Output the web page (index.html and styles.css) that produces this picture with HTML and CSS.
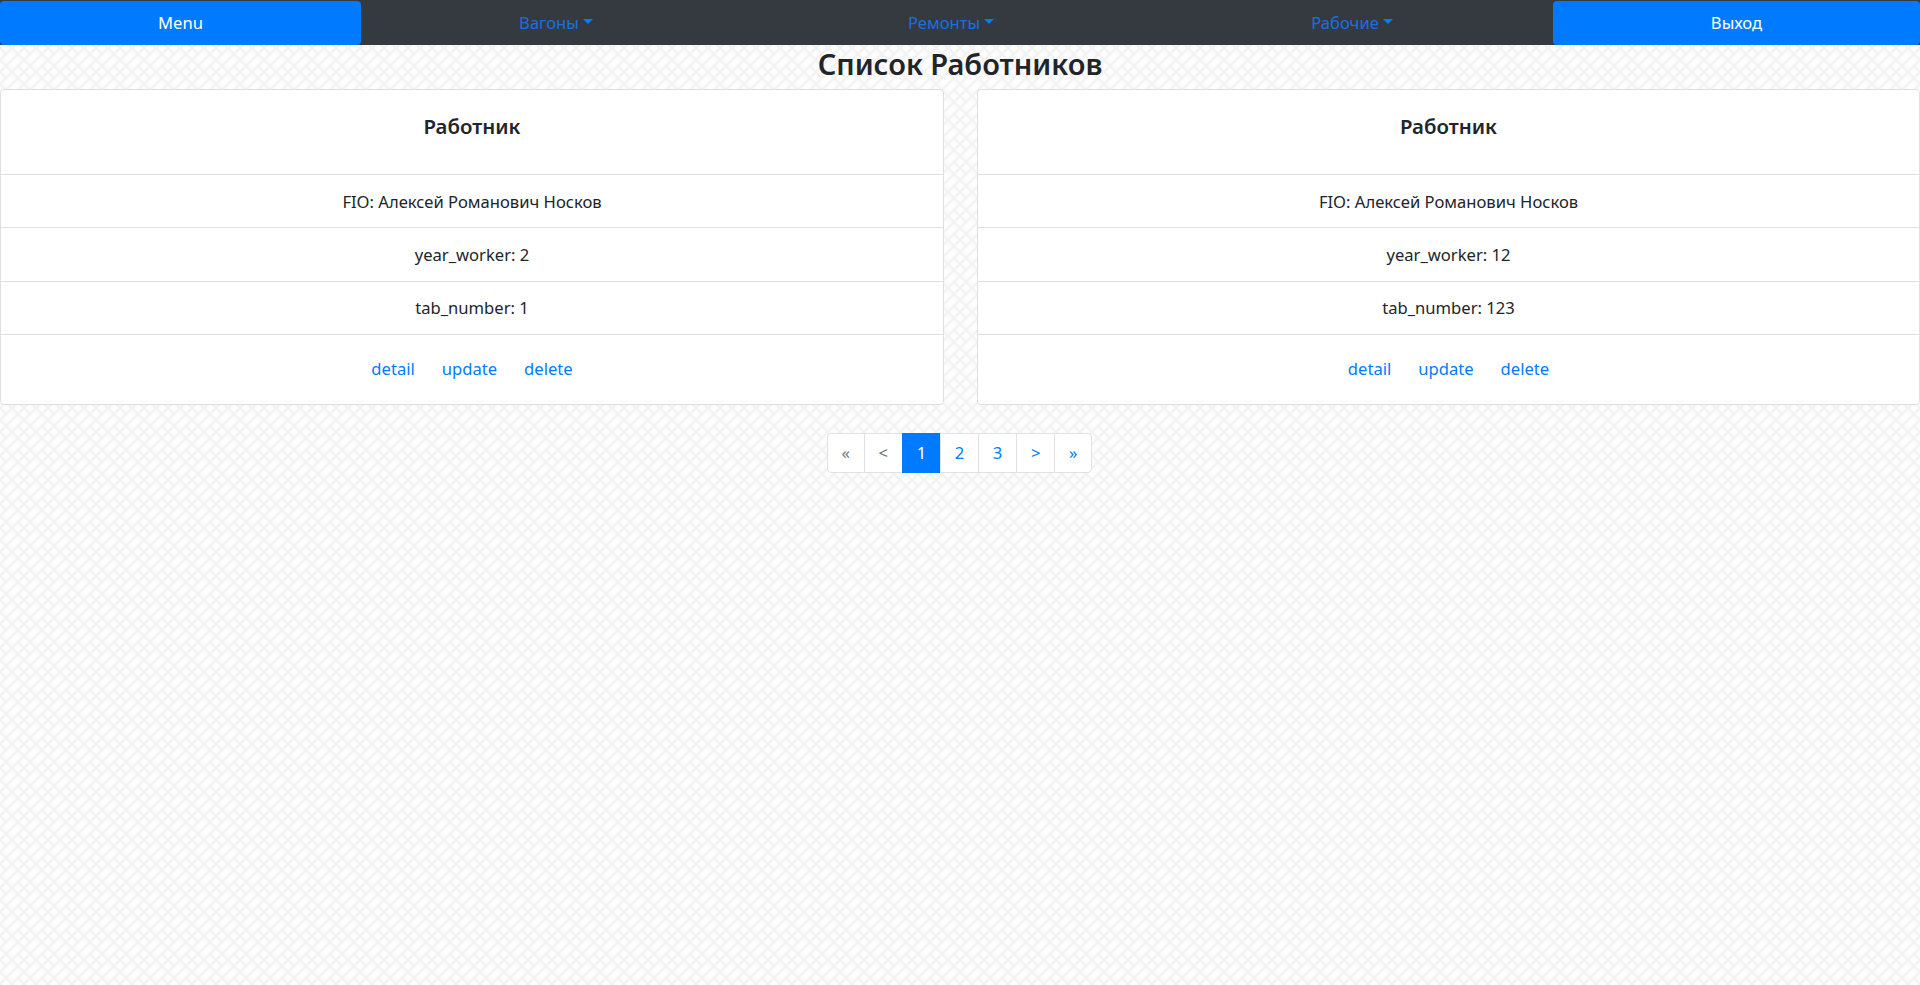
FILE: index.html
```html
<!DOCTYPE html>
<html>
<head>
<meta charset="utf-8">
<title>Список Работников</title>
<link rel="stylesheet" href="styles.css">
</head>
<body>
<nav class="navbar">
<a class="nav-btn nav-btn-left" href="#">Menu</a>
<div class="nav-links">
<a class="nav-link" href="#">Вагоны<span class="caret"></span></a>
<a class="nav-link" href="#">Ремонты<span class="caret"></span></a>
<a class="nav-link" href="#">Рабочие<span class="caret"></span></a>
</div>
<a class="nav-btn nav-btn-right" href="#">Выход</a>
</nav>
<h1 class="page-title">Список Работников</h1>
<div class="cards">
<div class="card">
<h5 class="card-head">Работник</h5>
<div class="card-row">FIO: Алексей Романович Носков</div>
<div class="card-row">year_worker: 2</div>
<div class="card-row">tab_number: 1</div>
<div class="card-foot"><a href="#">detail</a><a href="#">update</a><a href="#">delete</a></div>
</div>
<div class="card">
<h5 class="card-head">Работник</h5>
<div class="card-row">FIO: Алексей Романович Носков</div>
<div class="card-row">year_worker: 12</div>
<div class="card-row">tab_number: 123</div>
<div class="card-foot"><a href="#">detail</a><a href="#">update</a><a href="#">delete</a></div>
</div>
</div>
<ul class="pagination">
<li class="muted"><a href="#">«</a></li>
<li class="muted"><a href="#">&lt;</a></li>
<li class="active"><a href="#">1</a></li>
<li><a href="#">2</a></li>
<li><a href="#">3</a></li>
<li><a href="#">&gt;</a></li>
<li><a href="#">»</a></li>
</ul>
</body>
</html>
```

FILE: styles.css
```css
*{
box-sizing:border-box;
}
html,body{
height:100%;
}
body{
margin:0;
font-family:"Noto Sans","Open Sans",sans-serif;
font-size:16.6px;
color:#212529;
background-color:#fdfdfd;
background-image:url("data:image/svg+xml,%3Csvg xmlns='http://www.w3.org/2000/svg' width='24' height='24'%3E%3Cpath d='M12 0L24 12L12 24L0 12Z M6 18L18 6 M-6 -6L6 6 M18 18L30 30 M18 6L30 -6 M-6 30L6 18' fill='none' stroke='%23f3f3f3' stroke-width='2.5'/%3E%3C/svg%3E");
}
a{
text-decoration:none;
color:#007bff;
}
.navbar{
display:flex;
height:45px;
background:#343a40;
border-top:1px solid #343a40;
}
.nav-btn{
display:flex;
align-items:center;
justify-content:center;
padding-bottom:1px;
background:#007bff;
color:#fff;
border-radius:4px;
}
.nav-btn-left{
width:361px;
}
.nav-btn-right{
width:367px;
}
.nav-links{
flex:1;
display:grid;
grid-template-columns:390px 400px 402px;
}
.nav-link{
display:flex;
align-items:center;
justify-content:center;
padding-bottom:1px;
color:#1a6fe0;
}
.caret{
width:0;
height:0;
margin-left:4px;
margin-bottom:2px;
border-top:5px solid #007bff;
border-left:5px solid transparent;
border-right:5px solid transparent;
}
.page-title{
margin:0;
height:44px;
line-height:38px;
text-align:center;
font-size:29px;
font-weight:600;
}
.cards{
display:grid;
grid-template-columns:944px 943px;
justify-content:space-between;
}
.card{
background:#fff;
border:1px solid #dfdfdf;
border-radius:4px;
height:316px;
display:flex;
flex-direction:column;
}
.card-head{
margin:0;
height:84px;
padding-top:18px;
text-align:center;
font-size:20.4px;
font-weight:600;
line-height:36px;
}
.card-row{
height:53.33px;
display:flex;
align-items:center;
justify-content:center;
border-top:1px solid #dfdfdf;
}
.card-foot{
flex:1;
display:flex;
align-items:center;
justify-content:center;
gap:27px;
padding-bottom:2px;
border-top:1px solid #dfdfdf;
}
.pagination{
list-style:none;
display:flex;
justify-content:center;
margin:28px 0 0;
padding:0;
}
.pagination li{
background:#fff;
border:1px solid #dee2e6;
margin-left:-1px;
height:40px;
}
.pagination li:first-child{
border-radius:4px 0 0 4px;
}
.pagination li:last-child{
border-radius:0 4px 4px 0;
}
.pagination a{
display:block;
padding:0 13.8px;
line-height:38px;
}
.pagination .muted a{
color:#6c757d;
}
.pagination .active{
background:#007bff;
border-color:#007bff;
}
.pagination .active a{
color:#fff;
}
```
